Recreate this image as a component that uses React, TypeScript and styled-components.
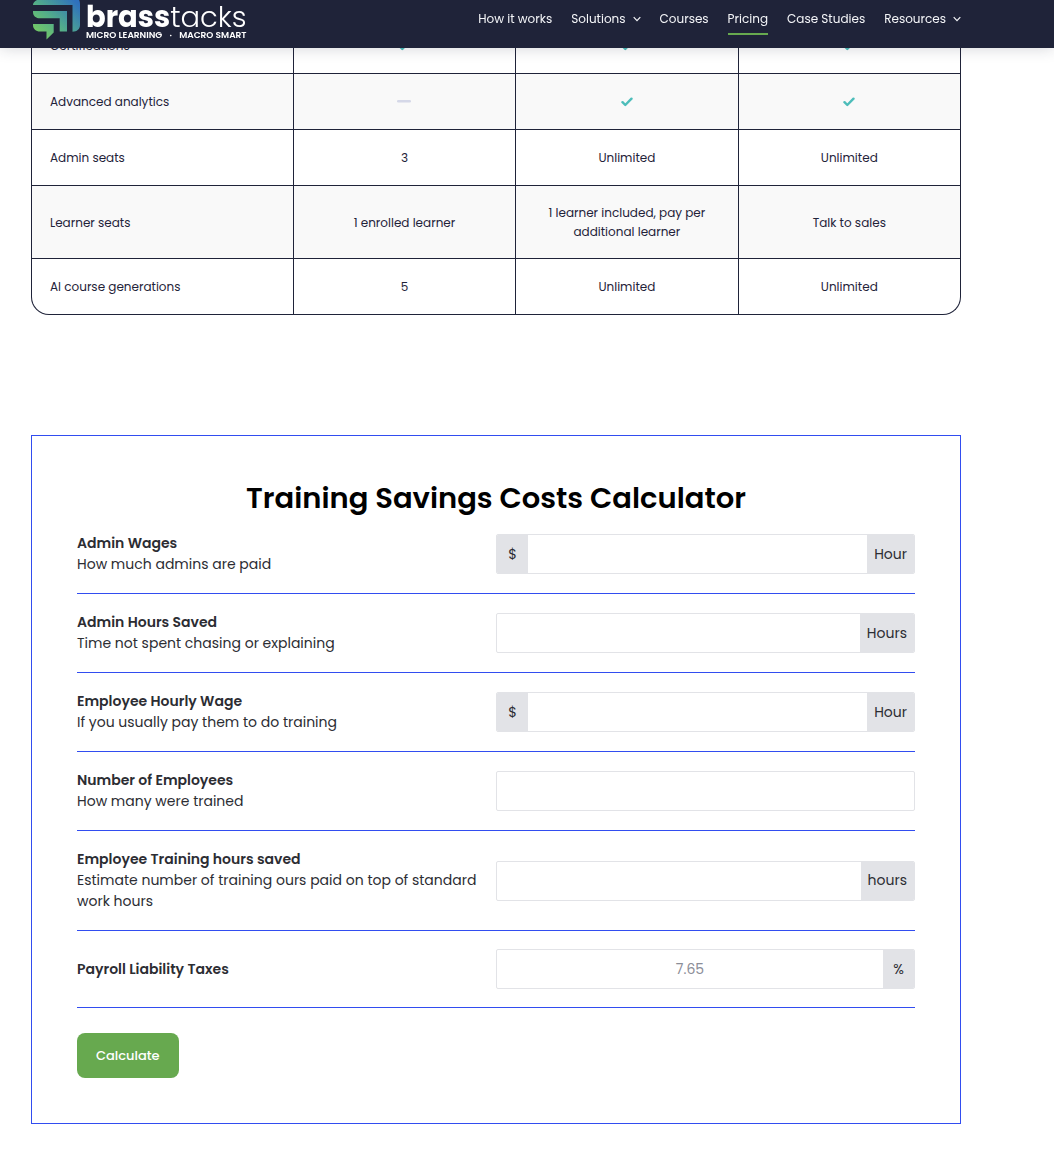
import React from "react";
import styled, { createGlobalStyle, css } from "styled-components";

const navy = "#1f2339";
const blue = "#324df0";
const green = "#67a94f";
const grey = "#e2e3e7";
const ink = "#2c2d33";

const GlobalStyle = createGlobalStyle`
  *, *::before, *::after { box-sizing: border-box; }
  body {
    margin: 0;
    background: #fff;
    color: ${ink};
    font-family: Poppins, Inter, "Open Sans", sans-serif;
  }
`;

const Header = styled.header`
  position: fixed;
  inset: 0 0 auto 0;
  z-index: 10;
  display: flex;
  justify-content: space-between;
  align-items: flex-start;
  height: 48px;
  padding: 0 93px 0 32px;
  background: ${navy};
  box-shadow: 0 0 16px rgba(31, 35, 57, 0.2);
`;

const Brand = styled.a`
  display: flex;
  gap: 5px;
  color: #fff;
  text-decoration: none;
`;

const BrandText = styled.span`
  display: flex;
  flex-direction: column;
  padding-top: 2px;
`;

const BrandName = styled.span`
  font-size: 29px;
  line-height: 30px;
  font-weight: 300;

  b {
    font-weight: 700;
  }
`;

const Tagline = styled.span`
  display: flex;
  justify-content: space-between;
  font-size: 9px;
  line-height: 6px;
  font-weight: 600;
`;

const Nav = styled.nav`
  display: flex;
  gap: 19px;
  padding-top: 9px;
`;

const NavLink = styled.a<{ $active?: boolean }>`
  display: flex;
  align-items: center;
  gap: 7px;
  padding-bottom: 4px;
  border-bottom: 2px solid ${(p) => (p.$active ? green : "transparent")};
  color: #f4f5f8;
  font-size: 12px;
  line-height: 20px;
  text-decoration: none;
  white-space: nowrap;
`;

const Page = styled.main`
  display: flex;
  flex-direction: column;
  gap: 120px;
  padding: 17px 93px 44px 31px;
`;

const TableFrame = styled.div`
  overflow: hidden;
  border: 1px solid ${navy};
  border-top: 0;
  border-radius: 0 0 18px 18px;
`;

const Table = styled.table`
  width: 100%;
  table-layout: fixed;
  border-collapse: separate;
  border-spacing: 0;
  color: ${navy};
  font-size: 12px;
  line-height: 19px;

  tr:nth-child(even) {
    background: #f9f9f9;
  }
`;

const cell = css`
  height: 56px;
  padding: 17px 18px;
  border-top: 1px solid ${navy};
  font-weight: 400;
`;

const Feature = styled.th`
  ${cell}
  width: 28.1%;
  text-align: left;
`;

const Value = styled.td`
  ${cell}
  border-left: 1px solid ${navy};
  text-align: center;

  svg {
    display: block;
    margin: 0 auto;
  }
`;

const Calculator = styled.form`
  padding: 45px;
  border: 1px solid ${blue};
`;

const Title = styled.h2`
  margin: 0;
  color: #000;
  font-size: 29px;
  line-height: 34px;
  font-weight: 600;
  text-align: center;
`;

const FieldRow = styled.div`
  display: grid;
  grid-template-columns: 1fr 1fr;
  align-items: center;
  padding: 18px 0;
  border-bottom: 1px solid ${blue};
`;

const FieldLabel = styled.label`
  padding-right: 18px;
  font-size: 14px;
  line-height: 21px;

  strong {
    display: block;
    font-weight: 600;
  }
`;

const Field = styled.div`
  display: flex;
  height: 40px;
  overflow: hidden;
  border: 1px solid ${grey};
  border-radius: 2px;
  background: #fff;
`;

const Addon = styled.span`
  display: flex;
  align-items: center;
  justify-content: center;
  min-width: 31px;
  padding: 0 7px;
  background: ${grey};
  font-size: 14px;
`;

const Input = styled.input`
  flex: 1;
  min-width: 0;
  padding: 0 12px;
  border: 0;
  outline: 0;
  background: transparent;
  color: ${ink};
  font: inherit;
  font-size: 14px;
  text-align: center;

  &::placeholder {
    color: #8b8d97;
    opacity: 1;
  }
`;

const Submit = styled.button`
  display: block;
  height: 45px;
  margin-top: 25px;
  padding: 0 19px;
  border: 0;
  border-radius: 8px;
  background: ${green};
  color: #fff;
  font: inherit;
  font-size: 13px;
  font-weight: 500;
  cursor: pointer;
`;

const LogoMark = () => (
  <svg width="49" height="40" viewBox="32 0 49 40" aria-hidden="true">
    <defs>
      <linearGradient id="brand" gradientUnits="userSpaceOnUse" x1="38" y1="36" x2="74" y2="0">
        <stop offset="0" stopColor="#76cb63" />
        <stop offset="0.45" stopColor="#52ac8b" />
        <stop offset="1" stopColor="#2f71bd" />
      </linearGradient>
    </defs>
    <g fill="url(#brand)">
      <path d="M33 5C33 3 34.500 1 37 0V-4H72C77 -4 80 -1 80 4V25C80 29 77 31.700 72.500 31.700V5Z" />
      <path d="M33 11H67V31.500H59.700V18.300H40C36 18.300 33 16 33 12Z" />
      <path d="M33 24H53.700V32.500L46.500 39.500V31.500H40C36 31.500 33 29 33 25Z" />
    </g>
  </svg>
);

const Chevron = () => (
  <svg width="8" height="6" viewBox="0 0 8 6" fill="none" stroke="#f4f5f8" strokeWidth="1.200" aria-hidden="true">
    <path d="M0.700 1.200L4 4.700L7.300 1.200" />
  </svg>
);

const Check = () => (
  <svg width="12" height="10" viewBox="0 0 12 10" fill="none" role="img" aria-label="Included">
    <path
      d="M1.500 5.200L4.300 8L10.500 1.700"
      stroke="#4dbdba"
      strokeWidth="2.400"
      strokeLinecap="round"
      strokeLinejoin="round"
    />
  </svg>
);

const Dash = () => (
  <svg width="14" height="3" viewBox="0 0 14 3" role="img" aria-label="Not included">
    <rect width="14" height="2.600" rx="1.300" fill="#d5d8e8" />
  </svg>
);

const links = [
  { text: "How it works" },
  { text: "Solutions", menu: true },
  { text: "Courses" },
  { text: "Pricing", active: true },
  { text: "Case Studies" },
  { text: "Resources", menu: true },
];

const features: { name: string; values: React.ReactNode[] }[] = [
  { name: "Certifications", values: [<Check />, <Check />, <Check />] },
  { name: "Advanced analytics", values: [<Dash />, <Check />, <Check />] },
  { name: "Admin seats", values: ["3", "Unlimited", "Unlimited"] },
  {
    name: "Learner seats",
    values: ["1 enrolled learner", "1 learner included, pay per additional learner", "Talk to sales"],
  },
  { name: "AI course generations", values: ["5", "Unlimited", "Unlimited"] },
];

const fields = [
  { id: "admin-wages", title: "Admin Wages", hint: "How much admins are paid", before: "$", after: "Hour" },
  { id: "admin-hours", title: "Admin Hours Saved", hint: "Time not spent chasing or explaining", after: "Hours" },
  {
    id: "employee-wage",
    title: "Employee Hourly Wage",
    hint: "If you usually pay them to do training",
    before: "$",
    after: "Hour",
  },
  { id: "employees", title: "Number of Employees", hint: "How many were trained" },
  {
    id: "training-hours",
    title: "Employee Training hours saved",
    hint: "Estimate number of training ours paid on top of standard work hours",
    after: "hours",
  },
  { id: "payroll-tax", title: "Payroll Liability Taxes", placeholder: "7.65", after: "%" },
];

export default function App() {
  return (
    <>
      <GlobalStyle />
      <Header>
        <Brand href="#">
          <LogoMark />
          <BrandText>
            <BrandName>
              <b>brass</b>tacks
            </BrandName>
            <Tagline>
              <span>MICRO LEARNING</span>
              <span>·</span>
              <span>MACRO SMART</span>
            </Tagline>
          </BrandText>
        </Brand>
        <Nav>
          {links.map((link) => (
            <NavLink key={link.text} href="#" $active={link.active}>
              {link.text}
              {link.menu && <Chevron />}
            </NavLink>
          ))}
        </Nav>
      </Header>
      <Page>
        <TableFrame>
          <Table>
            <tbody>
              {features.map((feature) => (
                <tr key={feature.name}>
                  <Feature scope="row">{feature.name}</Feature>
                  {feature.values.map((value, i) => (
                    <Value key={i}>{value}</Value>
                  ))}
                </tr>
              ))}
            </tbody>
          </Table>
        </TableFrame>
        <Calculator onSubmit={(e) => e.preventDefault()}>
          <Title>Training Savings Costs Calculator</Title>
          {fields.map((field) => (
            <FieldRow key={field.id}>
              <FieldLabel htmlFor={field.id}>
                <strong>{field.title}</strong>
                {field.hint}
              </FieldLabel>
              <Field>
                {field.before && <Addon>{field.before}</Addon>}
                <Input id={field.id} inputMode="decimal" placeholder={field.placeholder} />
                {field.after && <Addon>{field.after}</Addon>}
              </Field>
            </FieldRow>
          ))}
          <Submit type="submit">Calculate</Submit>
        </Calculator>
      </Page>
    </>
  );
}
